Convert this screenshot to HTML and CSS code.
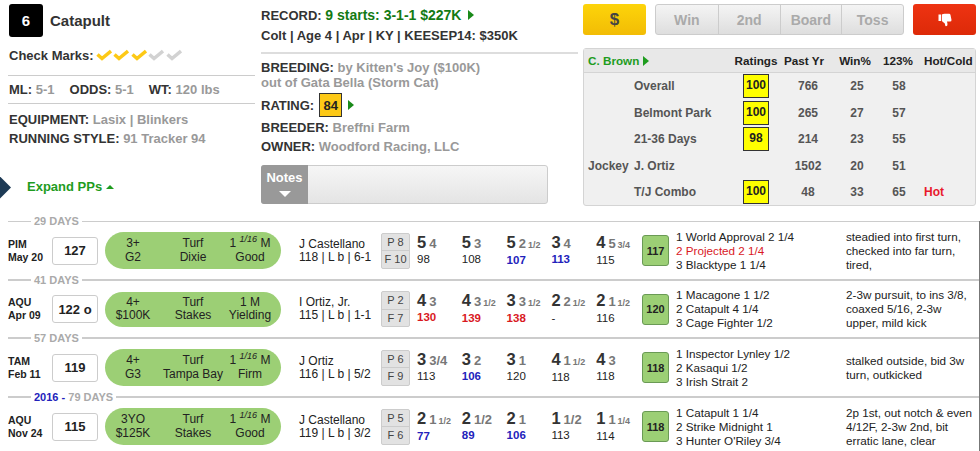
FILE: index.html
```html
<!DOCTYPE html>
<html lang="en">
<head>
  <meta charset="UTF-8" />
  <title>Catapult</title>
  <link rel="stylesheet" href="styles.css">
</head>
<body>
  <span class="nav-diamond"></span>
  <div class="top">
    <div class="col-left">
      <div class="horse">
        <span class="post">6</span>
        <span class="horse-name">Catapult</span>
      </div>
      <div class="checks">
        <b>Check Marks:</b>
        <svg class="check on" viewBox="0 0 16 12"><path d="M1.5 5.5 L6 9.5 L15 2"/></svg>
        <svg class="check on" viewBox="0 0 16 12"><path d="M1.5 5.5 L6 9.5 L15 2"/></svg>
        <svg class="check on" viewBox="0 0 16 12"><path d="M1.5 5.5 L6 9.5 L15 2"/></svg>
        <svg class="check off" viewBox="0 0 16 12"><path d="M1.5 5.5 L6 9.5 L15 2"/></svg>
        <svg class="check off" viewBox="0 0 16 12"><path d="M1.5 5.5 L6 9.5 L15 2"/></svg>
      </div>
      <div class="odds">
        <span><b>ML:</b> <i>5-1</i></span>
        <span><b>ODDS:</b> <i>5-1</i></span>
        <span><b>WT:</b> <i>120 lbs</i></span>
      </div>
      <div class="equip">
        <div><b>EQUIPMENT:</b> <i>Lasix | Blinkers</i></div>
        <div><b>RUNNING STYLE:</b> <i>91 Tracker 94</i></div>
      </div>
      <div class="expand">Expand PPs <span class="tri-up"></span></div>
    </div>

    <div class="col-mid">
      <div class="record">
        <div><b>RECORD:</b> <b class="green">9 starts: 3-1-1 $227K</b> <span class="tri-right"></span></div>
        <div><b>Colt | Age 4 | Apr | KY | KEESEP14: $350K</b></div>
      </div>
      <div class="breeding">
        <b>BREEDING:</b> <i>by Kitten's Joy ($100K)</i><br>
        <i>out of Gata Bella (Storm Cat)</i>
      </div>
      <div class="rating">
        <b>RATING:</b>
        <span class="rating-box">84</span>
        <span class="tri-right"></span>
      </div>
      <div class="people"><b>BREEDER:</b> <i>Breffni Farm</i></div>
      <div class="people"><b>OWNER:</b> <i>Woodford Racing, LLC</i></div>
      <div class="notes">
        <div class="notes-tab">Notes<span class="tri-down"></span></div>
      </div>
    </div>

    <div class="col-right">
      <div class="buttons">
        <div class="btn-money">$</div>
        <div class="btn-group">
          <span>Win</span>
          <span>2nd</span>
          <span>Board</span>
          <span>Toss</span>
        </div>
        <div class="btn-thumb">
          <svg width="14" height="14" viewBox="0 0 14 14"><path fill="#fff" d="M0.5 1.5 H3 V8 H0.5 Z M3.8 1.5 Q5 0.8 6.5 0.8 H11 Q12.3 0.8 12.5 2 L13.5 7 Q13.6 8.5 12 8.5 H9 L9.5 11 Q9.6 13.2 8 13.2 L7.4 13 L6.8 10.6 L3.8 8 Z"/></svg>
        </div>
      </div>
      <div class="stats">
        <div class="stats-head">
          <span class="trainer">C. Brown <span class="tri-right"></span></span>
          <span class="c">Ratings</span>
          <span class="c">Past Yr</span>
          <span class="c">Win%</span>
          <span class="c">123%</span>
          <span class="hot-head">Hot/Cold</span>
        </div>
        <div class="stats-row">
          <span></span><span>Overall</span><span class="c"><em class="y-box">100</em></span>
          <span class="c">766</span><span class="c">25</span><span class="c">58</span><span></span>
        </div>
        <div class="stats-row">
          <span></span><span>Belmont Park</span><span class="c"><em class="y-box">100</em></span>
          <span class="c">265</span><span class="c">27</span><span class="c">57</span><span></span>
        </div>
        <div class="stats-row">
          <span></span><span>21-36 Days</span><span class="c"><em class="y-box">98</em></span>
          <span class="c">214</span><span class="c">23</span><span class="c">55</span><span></span>
        </div>
        <div class="stats-row">
          <span>Jockey</span><span>J. Ortiz</span><span></span>
          <span class="c">1502</span><span class="c">20</span><span class="c">51</span><span></span>
        </div>
        <div class="stats-row">
          <span></span><span>T/J Combo</span><span class="c"><em class="y-box">100</em></span>
          <span class="c">48</span><span class="c">33</span><span class="c">65</span><span class="hot">Hot</span>
        </div>
      </div>
    </div>
  </div>

  <div class="pps">
    <div class="gap thin"><span>29 DAYS</span></div>
    <div class="pp">
      <div class="track">PIM<br>May 20</div>
      <div class="speed">127</div>
      <div class="pill">
        <div>3+<br>G2</div>
        <div>Turf<br>Dixie</div>
        <div>1 <sup>1/16</sup> M<br>Good</div>
      </div>
      <div class="jockey">J Castellano<br>118 | L b | 6-1</div>
      <div class="pf"><span>P 8</span><span>F 10</span></div>
      <div class="calls">
        <div><b>5</b><u>4</u><br>98</div>
        <div><b>5</b><u>3</u><br>108</div>
        <div><b>5</b><u>2</u><s>1/2</s><br><strong class="blue">107</strong></div>
        <div><b>3</b><u>4</u><br><strong class="blue">113</strong></div>
        <div><b>4</b><u>5</u><s>3/4</s><br>115</div>
      </div>
      <div class="fig">117</div>
      <div class="finish">1 World Approval 2 1/4<br><span class="red">2 Projected 2 1/4</span><br>3 Blacktype 1 1/4</div>
      <div class="comment">steadied into first turn, checked into far turn, tired,</div>
    </div>

    <div class="gap"><span>41 DAYS</span></div>
    <div class="pp short">
      <div class="track">AQU<br>Apr 09</div>
      <div class="speed">122 o</div>
      <div class="pill">
        <div>4+<br>$100K</div>
        <div>Turf<br>Stakes</div>
        <div>1 M<br>Yielding</div>
      </div>
      <div class="jockey">I Ortiz, Jr.<br>115 | L b | 1-1</div>
      <div class="pf"><span>P 2</span><span>F 7</span></div>
      <div class="calls">
        <div><b>4</b><u>3</u><br><strong class="red">130</strong></div>
        <div><b>4</b><u>3</u><s>1/2</s><br><strong class="red">139</strong></div>
        <div><b>3</b><u>3</u><s>1/2</s><br><strong class="red">138</strong></div>
        <div><b>2</b><u>2</u><s>1/2</s><br>-</div>
        <div><b>2</b><u>1</u><s>1/2</s><br>116</div>
      </div>
      <div class="fig">120</div>
      <div class="finish">1 Macagone 1 1/2<br>2 Catapult 4 1/4<br>3 Cage Fighter 1/2</div>
      <div class="comment">2-3w pursuit, to ins 3/8, coaxed 5/16, 2-3w upper, mild kick</div>
    </div>

    <div class="gap"><span>57 DAYS</span></div>
    <div class="pp">
      <div class="track">TAM<br>Feb 11</div>
      <div class="speed">119</div>
      <div class="pill">
        <div>4+<br>G3</div>
        <div>Turf<br>Tampa Bay</div>
        <div>1 <sup>1/16</sup> M<br>Firm</div>
      </div>
      <div class="jockey">J Ortiz<br>116 | L b | 5/2</div>
      <div class="pf"><span>P 6</span><span>F 9</span></div>
      <div class="calls">
        <div><b>3</b><u>3/4</u><br>113</div>
        <div><b>3</b><u>2</u><br><strong class="blue">106</strong></div>
        <div><b>3</b><u>1</u><br>120</div>
        <div><b>4</b><u>1</u><s>1/2</s><br>118</div>
        <div><b>4</b><u>3</u><br>118</div>
      </div>
      <div class="fig">118</div>
      <div class="finish">1 Inspector Lynley 1/2<br>2 Kasaqui 1/2<br>3 Irish Strait 2</div>
      <div class="comment">stalked outside, bid 3w turn, outkicked</div>
    </div>

    <div class="gap"><span><span class="year">2016 -</span> 79 DAYS</span></div>
    <div class="pp">
      <div class="track">AQU<br>Nov 24</div>
      <div class="speed">115</div>
      <div class="pill">
        <div>3YO<br>$125K</div>
        <div>Turf<br>Stakes</div>
        <div>1 <sup>1/16</sup> M<br>Good</div>
      </div>
      <div class="jockey">J Castellano<br>119 | L b | 3/2</div>
      <div class="pf"><span>P 5</span><span>F 6</span></div>
      <div class="calls">
        <div><b>2</b><u>1</u><s>1/2</s><br><strong class="blue">77</strong></div>
        <div><b>2</b><u>1/2</u><br><strong class="blue">89</strong></div>
        <div><b>2</b><u>1</u><br><strong class="blue">106</strong></div>
        <div><b>1</b><u>1/2</u><br>113</div>
        <div><b>1</b><u>1</u><s>1/4</s><br>114</div>
      </div>
      <div class="fig">118</div>
      <div class="finish">1 Catapult 1 1/4<br>2 Strike Midnight 1<br>3 Hunter O'Riley 3/4</div>
      <div class="comment">2p 1st, out notch &amp; even 4/12F, 2-3w 2nd, bit erratic lane, clear</div>
    </div>
  </div>
</body>
</html>
```

FILE: styles.css
```css
* {
  box-sizing: border-box;
}
html, body {
  height: 451px;
  overflow: hidden;
}
body {
  margin: 0;
  background-color: #fff;
  color: #333;
  font-family: "Liberation Sans", Arial, sans-serif;
  font-size: 13px;
  position: relative;
}
i {
  font-style: normal;
  font-weight: bold;
  color: #999;
}
.nav-diamond {
  position: absolute;
  left: -14px;
  top: 175px;
  width: 25px;
  height: 25px;
  background-color: #1d3a55;
  clip-path: polygon(50% 0, 100% 50%, 50% 100%, 0 50%);
}

/* top section */
.top {
  display: grid;
  grid-template-columns: 248px 317px 394px;
  column-gap: 5px;
  height: 214px;
  padding: 4px 0 0 8px;
}
.horse {
  display: flex;
  align-items: center;
  gap: 7px;
  height: 33px;
  padding-left: 1px;
}
.post {
  width: 34px;
  height: 33px;
  background-color: #000;
  color: #fff;
  border-radius: 3px;
  font-size: 15px;
  font-weight: bold;
  display: flex;
  align-items: center;
  justify-content: center;
}
.horse-name {
  font-size: 15px;
  font-weight: bold;
}
.checks {
  display: flex;
  align-items: center;
  height: 20px;
  margin-top: 8px;
  padding-left: 1px;
  font-size: 13px;
}
.check {
  width: 16px;
  height: 12px;
  margin-right: 1.5px;
  fill: none;
  stroke-width: 3.5;
}
.checks b {
  margin-right: 2px;
}
.check.on {
  stroke: #fdc916;
}
.check.off {
  stroke: #d2d2d2;
}
.odds {
  display: flex;
  gap: 15px;
  margin-top: 10px;
  width: 247px;
  height: 29px;
  padding: 6px 0 0 1px;
  border-top: 1px solid #ccc;
  border-bottom: 1px solid #ccc;
}
.equip {
  margin-top: 7px;
  padding-left: 1px;
  line-height: 18.5px;
}
.expand {
  margin: 31px 0 0 19px;
  color: #1e9c1e;
  font-weight: bold;
}
.tri-up {
  display: inline-block;
  vertical-align: 2px;
  border-left: 4px solid transparent;
  border-right: 4px solid transparent;
  border-bottom: 4px solid #1e9c1e;
}
.tri-right {
  display: inline-block;
  margin-left: 3px;
  border-top: 5px solid transparent;
  border-bottom: 5px solid transparent;
  border-left: 6px solid #1a8a1a;
}
.green {
  color: #137a13;
  font-size: 14px;
}

/* middle column */
.record {
  margin-top: 2px;
  line-height: 19.5px;
  height: 46px;
}
.breeding {
  border-top: 2px solid #ddd;
  padding-top: 6px;
  line-height: 15px;
}
.rating {
  display: flex;
  align-items: center;
  height: 24px;
  margin-top: 3px;
}
.rating-box {
  width: 23px;
  height: 24px;
  margin-left: 5px;
  background-color: #fdc916;
  border: 1px solid #333;
  color: #222;
  font-weight: bold;
  display: flex;
  align-items: center;
  justify-content: center;
}
.rating .tri-right {
  margin-left: 6px;
}
.people {
  margin-top: 3px;
  line-height: 16px;
}
.notes {
  width: 287px;
  height: 39px;
  margin-top: 10px;
  border: 1px solid #ccc;
  border-radius: 3px;
  background: linear-gradient(#f6f6f6, #e4e4e4);
  display: flex;
}
.notes-tab {
  width: 47px;
  margin: -1px 0 -1px -1px;
  background-color: #999;
  color: #fff;
  font-weight: bold;
  border-radius: 3px 0 0 3px;
  display: flex;
  flex-direction: column;
  align-items: center;
  padding-top: 5px;
  gap: 6px;
}
.tri-down {
  border-left: 6px solid transparent;
  border-right: 6px solid transparent;
  border-top: 6px solid #fff;
}

/* right column */
.buttons {
  display: flex;
  gap: 9px;
  height: 31px;
}
.btn-money {
  width: 63px;
  background: linear-gradient(#fdd40a, #f2bc05);
  border-radius: 3px;
  color: #444;
  font-size: 17px;
  font-weight: bold;
  display: flex;
  align-items: center;
  justify-content: center;
}
.btn-group {
  width: 249px;
  display: grid;
  grid-template-columns: repeat(4, 1fr);
  border: 1px solid #ccc;
  border-radius: 3px;
  background: linear-gradient(#f4f4f4, #dedede);
  color: #aaa;
  font-size: 14px;
  font-weight: bold;
}
.btn-group span {
  display: flex;
  align-items: center;
  justify-content: center;
  border-left: 1px solid #ccc;
}
.btn-group span:first-child {
  border-left: 0;
}
.btn-thumb {
  width: 63px;
  background: linear-gradient(#ee3312, #dd2a08);
  border-radius: 3px;
  display: flex;
  align-items: center;
  justify-content: center;
}
.stats {
  width: 393px;
  height: 158px;
  margin-top: 13px;
  background-color: #f0f0f0;
  border: 1px solid #d4d4d4;
  border-radius: 3px;
  font-weight: bold;
  font-size: 12px;
}
.stats-head,
.stats-row {
  display: grid;
  align-items: center;
  padding-left: 4px;
}
.stats-head {
  grid-template-columns: 143px 50px 46px 56px 28px 60px;
  height: 24px;
  background-color: #e8e8e8;
  border-bottom: 1px solid #d4d4d4;
  color: #222;
  font-size: 11.7px;
}
.trainer {
  color: #1e9c1e;
  white-space: nowrap;
}
.trainer .tri-right {
  margin-left: 0;
  border-left-color: #1e9c1e;
  vertical-align: -1px;
}
.stats-row {
  grid-template-columns: 46px 97px 50px 54px 44px 40px 60px;
  height: 26.5px;
  color: #555;
}
.hot-head {
  padding-left: 13px;
  white-space: nowrap;
}
.hot {
  color: #e8192c;
  padding-left: 5px;
}
.c {
  text-align: center;
}
.y-box {
  display: block;
  width: 26px;
  height: 24px;
  margin: 0 auto;
  background-color: #ff0;
  border: 1px solid #333;
  color: #222;
  font-style: normal;
  line-height: 20px;
}

/* past performances */
.pps {
  margin-left: 8px;
  position: relative;
}
.pps::after {
  content: "";
  position: absolute;
  top: 7px;
  right: 0;
  bottom: -10px;
  width: 1px;
  background-color: #777;
}
.gap {
  height: 14px;
  display: flex;
  align-items: center;
  color: #aaa;
  font-size: 11px;
  font-weight: bold;
}
.gap::before {
  content: "";
  width: 23px;
  height: 2px;
  background-color: #ccc;
}
.gap::after {
  content: "";
  flex: 1;
  height: 2px;
  background-color: #ccc;
}
.gap.thin::before,
.gap.thin::after {
  height: 1px;
}
.gap > span {
  padding: 0 3px;
}
.year {
  color: #2222bb;
}
.pp {
  height: 45px;
  display: flex;
  align-items: center;
  color: #222;
  font-size: 12px;
}
.pp.short {
  height: 44px;
}
.track {
  width: 44px;
  font-weight: bold;
  line-height: 13px;
  font-size: 10.5px;
}
.speed {
  width: 46px;
  height: 28px;
  border: 1px solid #ccc;
  border-radius: 3px;
  font-size: 13px;
  font-weight: bold;
  display: flex;
  align-items: center;
  justify-content: center;
}
.pill {
  width: 176px;
  height: 37px;
  margin: 0 18px 0 7px;
  background-color: #9ccf75;
  border-radius: 19px;
  display: grid;
  grid-template-columns: 56px 64px 50px;
  align-items: center;
  text-align: center;
  line-height: 13.5px;
  white-space: nowrap;
}
.short .pill {
  height: 35px;
}
.pill sup {
  font-size: 9px;
  font-style: italic;
  line-height: 0;
}
.jockey {
  width: 82px;
  line-height: 13px;
  white-space: nowrap;
}
.pf {
  width: 29px;
  height: 36px;
  background-color: #e2e2e2;
  border: 1px solid #ccc;
  border-radius: 2px;
  color: #444;
  font-size: 11px;
  display: flex;
  flex-direction: column;
}
.pf span {
  flex: 1;
  display: flex;
  align-items: center;
  justify-content: center;
}
.pf span:first-child {
  border-bottom: 1px solid #ccc;
}
.calls {
  width: 224px;
  margin-left: 7px;
  padding-top: 1px;
  display: grid;
  grid-template-columns: repeat(5, 44.8px);
  font-size: 11.5px;
  line-height: 15px;
  white-space: nowrap;
}
.calls b {
  font-size: 16.5px;
  color: #333;
}
.calls u {
  text-decoration: none;
  font-weight: bold;
  font-size: 13px;
  color: #777;
  margin-left: 3px;
}
.calls s {
  text-decoration: none;
  font-weight: bold;
  font-size: 9px;
  color: #777;
  margin-left: 2px;
}
.blue {
  color: #2222bb;
}
.red {
  color: #d9191f;
}
.fig {
  width: 27px;
  height: 31px;
  margin-left: 1px;
  background-color: #9ccf75;
  border: 1px solid #6a9a55;
  border-radius: 3px;
  font-size: 11px;
  font-weight: bold;
  display: flex;
  align-items: center;
  justify-content: center;
}
.finish {
  width: 170px;
  margin-left: 7px;
  font-size: 11.7px;
  line-height: 14px;
}
.comment {
  width: 130px;
  font-size: 11.7px;
  line-height: 14px;
}
```
